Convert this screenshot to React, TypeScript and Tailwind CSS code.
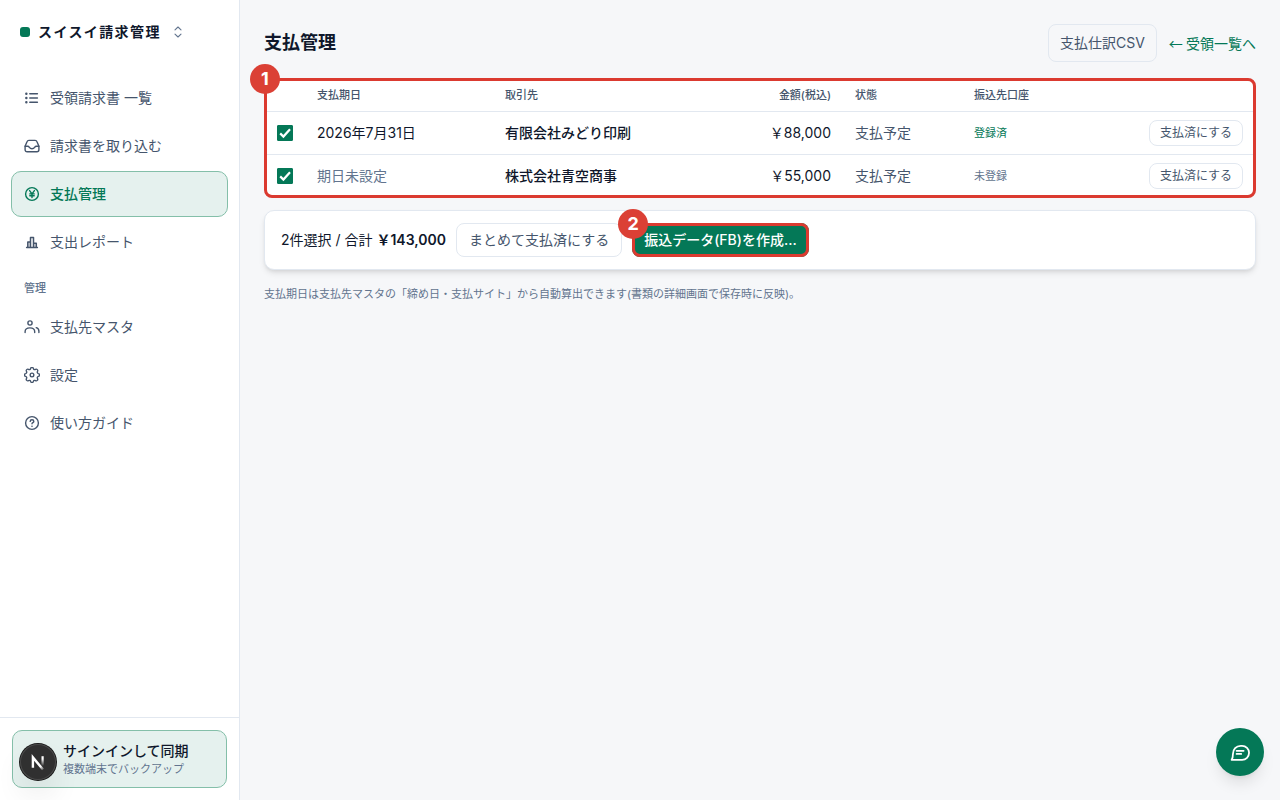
import clsx from "clsx";
import { useState } from "react";

type IconProps = { className?: string };

const strokeProps = {
  fill: "none",
  stroke: "currentColor",
  strokeLinecap: "round",
  strokeLinejoin: "round",
} as const;

const ListIcon = ({ className }: IconProps) => (
  <svg viewBox="0 0 16 16" className={className} {...strokeProps} strokeWidth={1.5} aria-hidden>
    <path d="M5.8 3.8h7.6M5.8 8h7.6M5.8 12.2h7.6" />
    <path d="M2.3 3.8h.1M2.3 8h.1M2.3 12.2h.1" strokeWidth={2.4} />
  </svg>
);

const InboxIcon = ({ className }: IconProps) => (
  <svg viewBox="0 0 16 16" className={className} {...strokeProps} strokeWidth={1.4} aria-hidden>
    <path d="M1.1 8.2v3.6a2 2 0 0 0 2 2h9.8a2 2 0 0 0 2-2V8.2L13 3.7a2 2 0 0 0-1.9-1.3H4.9A2 2 0 0 0 3 3.7z" />
    <path d="M1.1 8.2h2.5c1 0 1.4.5 1.8 1.1.5.8 1.3 1.4 2.6 1.4s2.1-.6 2.6-1.4c.4-.6.8-1.1 1.8-1.1h2.5" />
  </svg>
);

const YenIcon = ({ className }: IconProps) => (
  <svg viewBox="0 0 16 16" className={className} {...strokeProps} strokeWidth={1.4} aria-hidden>
    <circle cx="8" cy="8" r="6.4" />
    <path d="M5.6 4.6 8 7.8l2.4-3.2M8 7.8v3.8M5.8 7.9h4.4M5.8 9.8h4.4" />
  </svg>
);

const ChartIcon = ({ className }: IconProps) => (
  <svg viewBox="0 0 16 16" className={className} {...strokeProps} strokeWidth={1.5} aria-hidden>
    <path d="M2.6 13.4h10.8M3.8 13.2V8h2.6M6.5 13.2V3.4h3v9.8M9.5 9.2h2.8v4" />
    <path d="M5.1 8.4v4.6M10.9 9.8v3.2" strokeWidth={1} strokeOpacity={0.4} />
  </svg>
);

const UsersIcon = ({ className }: IconProps) => (
  <svg viewBox="0 0 16 16" className={className} {...strokeProps} strokeWidth={1.4} aria-hidden>
    <circle cx="6" cy="4" r="2.1" />
    <path d="M1.1 13.6v-.9c0-2.2 1.8-3.8 4.8-3.8s4.8 1.6 4.8 3.8v.9" />
    <path d="M12.2 8.6c1.7.5 2.7 1.7 2.7 3.5v1.5" />
  </svg>
);

const GearIcon = ({ className }: IconProps) => (
  <svg viewBox="2 1.4 20 20" className={className} {...strokeProps} strokeWidth={1.7} aria-hidden>
    <path d="M10.3 3.3c.4-1.9 3-1.9 3.4 0a1.8 1.8 0 0 0 2.7 1.1c1.6-1 3.5.9 2.5 2.5a1.8 1.8 0 0 0 1.1 2.7c1.9.4 1.9 3.1 0 3.5a1.8 1.8 0 0 0-1.1 2.8c1 1.6-.9 3.5-2.5 2.5a1.8 1.8 0 0 0-2.7 1.1c-.4 1.9-3 1.9-3.4 0a1.8 1.8 0 0 0-2.7-1.1c-1.6 1-3.5-.9-2.5-2.5A1.8 1.8 0 0 0 4 13.1c-1.9-.4-1.9-3.1 0-3.5a1.8 1.8 0 0 0 1.1-2.7c-1-1.6.9-3.5 2.5-2.5a1.8 1.8 0 0 0 2.7-1.1z" />
    <circle cx="12" cy="11.4" r="2.3" />
  </svg>
);

const HelpIcon = ({ className }: IconProps) => (
  <svg viewBox="0 0 16 16" className={className} {...strokeProps} strokeWidth={1.4} aria-hidden>
    <circle cx="8" cy="8" r="6.4" />
    <path d="M6.2 6.4c0-1 .8-1.7 1.8-1.7s1.8.7 1.8 1.7c0 1.2-1.8 1.2-1.8 2.4" />
    <path d="M8 11.2v.1" strokeWidth={1.6} />
  </svg>
);

const SwitchIcon = ({ className }: IconProps) => (
  <svg viewBox="0 0 14 14" className={className} {...strokeProps} strokeWidth={1.1} aria-hidden>
    <path d="M4 4.9 7 2l3 2.9M4 9.1 7 12l3-2.9" />
  </svg>
);

const ChatIcon = ({ className }: IconProps) => (
  <svg viewBox="0 0 24 24" className={className} {...strokeProps} strokeWidth={1.8} aria-hidden>
    <path d="M3.6 19.8c1.3-1.4 1.3-3.3 1.3-5.6 0-5 3.3-8.3 7.8-8.3h1.4a6.95 6.95 0 0 1 0 13.9z" />
    <path d="M8.6 10.8h7M8.6 13.9h4.6" />
  </svg>
);

const mainNav = [
  { id: "received", label: "受領請求書 一覧", icon: ListIcon },
  { id: "import", label: "請求書を取り込む", icon: InboxIcon },
  { id: "payments", label: "支払管理", icon: YenIcon },
  { id: "report", label: "支出レポート", icon: ChartIcon },
];

const adminNav = [
  { id: "payees", label: "支払先マスタ", icon: UsersIcon },
  { id: "settings", label: "設定", icon: GearIcon },
  { id: "guide", label: "使い方ガイド", icon: HelpIcon },
];

const payments = [
  { id: 1, due: "2026年7月31日", payee: "有限会社みどり印刷", amount: 88000, status: "支払予定", registered: true },
  { id: 2, due: null, payee: "株式会社青空商事", amount: 55000, status: "支払予定", registered: false },
];

const yen = (n: number) => "￥" + n.toLocaleString("en-US");

const NavItem = ({ item, active }: { item: (typeof mainNav)[number]; active?: boolean }) => {
  const Icon = item.icon;
  return (
    <a
      href={"#" + item.id}
      aria-current={active ? "page" : undefined}
      className={clsx(
        "flex h-[46px] items-center gap-2.5 rounded-[10px] border px-3 text-sm",
        active
          ? "border-[#84bfa9] bg-[#e5f1ee] font-medium text-[#047857]"
          : "border-transparent text-slate-600",
      )}
    >
      <Icon className="size-4 shrink-0" />
      {item.label}
    </a>
  );
};

const Sidebar = () => (
  <aside className="flex w-60 shrink-0 flex-col border-r border-slate-200 bg-white">
    <button className="flex h-16 items-center px-5 text-sm font-bold tracking-widest text-slate-900">
      <span className="mr-2 size-2.5 rounded-[3px] bg-[#047857]" />
      スイスイ請求管理
      <SwitchIcon className="ml-2.5 size-3.5 text-slate-500" />
    </button>

    <nav className="flex flex-1 flex-col gap-0.5 px-[11px] pt-[11px]">
      {mainNav.map((item) => (
        <NavItem key={item.id} item={item} active={item.id === "payments"} />
      ))}
      <p className="px-[13px] pt-[13px] pb-1.5 text-[11px] leading-4 font-medium text-slate-500">管理</p>
      {adminNav.map((item) => (
        <NavItem key={item.id} item={item} />
      ))}
    </nav>

    <div className="border-t border-slate-200 p-3">
      <button className="flex h-[58px] w-full flex-col justify-center rounded-[10px] border border-[#84bfa9] bg-[#e5f1ee] pl-[50px] text-left">
        <span className="text-sm font-medium text-slate-900">サインインして同期</span>
        <span className="text-[11px] leading-4 text-slate-500">複数端末でバックアップ</span>
      </button>
    </div>
  </aside>
);

const Checkbox = ({ label, checked, onChange }: { label: string; checked: boolean; onChange: () => void }) => (
  <span className="grid size-4">
    <input
      type="checkbox"
      aria-label={label}
      checked={checked}
      onChange={onChange}
      className="peer col-start-1 row-start-1 size-4 appearance-none rounded-[1px] border border-slate-400 bg-white checked:border-[#047857] checked:bg-[#047857]"
    />
    <svg
      viewBox="0 0 16 16"
      className="pointer-events-none invisible col-start-1 row-start-1 size-4 text-white peer-checked:visible"
      fill="none"
      stroke="currentColor"
      strokeWidth={2.2}
      aria-hidden
    >
      <path d="M3.2 8.4 6.4 11.6 13 4.2" />
    </svg>
  </span>
);

const Marker = ({ children }: { children: React.ReactNode }) => (
  <span className="absolute -top-3.5 -left-3.5 flex size-[30px] items-center justify-center rounded-full bg-[#db4035] text-lg font-bold text-white">
    {children}
  </span>
);

const DevBadge = () => (
  <button
    aria-label="Dev Tools"
    className="fixed bottom-5 left-5 flex size-9 items-center justify-center rounded-full bg-[#303030] shadow-[0_0_0_1px_#171717,inset_0_0_0_1px_#4a4a4a,0_16px_32px_-8px_rgba(0,0,0,0.24)]"
  >
    <svg viewBox="0 0 36 36" className="size-9" fill="none" aria-hidden>
      <defs>
        <linearGradient id="diag" x1="18" y1="18" x2="24" y2="26" gradientUnits="userSpaceOnUse">
          <stop offset="0.5" stopColor="#fff" />
          <stop offset="1" stopColor="#fff" stopOpacity="0.1" />
        </linearGradient>
        <linearGradient id="stem" x1="22.6" y1="12" x2="22.6" y2="22" gradientUnits="userSpaceOnUse">
          <stop offset="0.3" stopColor="#fff" />
          <stop offset="1" stopColor="#fff" stopOpacity="0" />
        </linearGradient>
      </defs>
      <path d="M12.9 23.8V13.4L23 25.6" stroke="url(#diag)" strokeWidth="2.4" />
      <path d="M22.6 12.2v9.6" stroke="url(#stem)" strokeWidth="2.2" />
    </svg>
  </button>
);

const App = () => {
  const [selected, setSelected] = useState<number[]>([1, 2]);

  const toggle = (id: number) =>
    setSelected((prev) => (prev.includes(id) ? prev.filter((x) => x !== id) : [...prev, id]));

  const total = payments
    .filter((p) => selected.includes(p.id))
    .reduce((sum, p) => sum + p.amount, 0);

  return (
    <div className="flex min-h-screen bg-[#f6f7f9] font-['Inter','Noto_Sans_CJK_JP',sans-serif] text-slate-900">
      <Sidebar />

      <main className="min-w-0 flex-1 p-6">
        <header className="mb-4 flex items-center justify-between">
          <h1 className="text-lg font-bold">支払管理</h1>
          <div className="flex items-center gap-3 text-sm">
            <button className="h-[38px] rounded-lg border border-slate-200 px-[11px] text-slate-600">
              支払仕訳CSV
            </button>
            <a href="#received" className="font-['Noto_Sans_CJK_JP',sans-serif] text-[#047857]">
              ← 受領一覧へ
            </a>
          </div>
        </header>

        <section className="relative">
          <div className="overflow-hidden rounded-lg border border-slate-200 bg-white">
            <table className="w-full table-fixed text-left text-sm">
              <colgroup>
                <col className="w-10" />
                <col className="w-[19%]" />
                <col />
                <col className="w-28" />
                <col className="w-[119px]" />
                <col className="w-[120px]" />
                <col className="w-[173px]" />
              </colgroup>
              <thead>
                <tr className="border-b border-slate-200 text-[11px] leading-4 text-slate-600 *:px-3 *:py-2 *:font-medium">
                  <th aria-label="選択" />
                  <th>支払期日</th>
                  <th>取引先</th>
                  <th className="text-right">金額(税込)</th>
                  <th>状態</th>
                  <th>振込先口座</th>
                  <th aria-label="操作" />
                </tr>
              </thead>
              <tbody className="divide-y divide-slate-200">
                {payments.map((p) => (
                  <tr key={p.id} className="*:px-3 *:py-2">
                    <td>
                      <Checkbox
                        label={p.payee}
                        checked={selected.includes(p.id)}
                        onChange={() => toggle(p.id)}
                      />
                    </td>
                    <td className={p.due ? "" : "text-slate-500"}>{p.due ?? "期日未設定"}</td>
                    <td className="font-medium">{p.payee}</td>
                    <td className="text-right">{yen(p.amount)}</td>
                    <td className="text-slate-600">{p.status}</td>
                    <td
                      className={clsx(
                        "text-[11px] leading-5",
                        p.registered ? "text-[#047857]" : "text-slate-500",
                      )}
                    >
                      {p.registered ? "登録済" : "未登録"}
                    </td>
                    <td>
                      <button className="ml-auto block h-[26px] rounded-lg border border-slate-200 px-2.5 text-xs text-slate-600">
                        支払済にする
                      </button>
                    </td>
                  </tr>
                ))}
              </tbody>
            </table>
          </div>
          <div className="pointer-events-none absolute inset-0 rounded-lg border-3 border-[#db3a30]" />
          <Marker>1</Marker>
        </section>

        <section className="mt-3 flex items-center gap-2.5 rounded-[10px] border border-slate-200 bg-white px-4 py-3 text-sm shadow-md">
          <p>
            {selected.length}件選択 / 合計 <strong className="font-semibold">{yen(total)}</strong>
          </p>
          <button className="h-[34px] rounded-lg border border-slate-200 px-3 text-slate-600">
            まとめて支払済にする
          </button>
          <div className="relative">
            <button className="h-[34px] rounded-lg bg-[#047857] px-3 font-medium text-white">
              振込データ(FB)を作成…
            </button>
            <div className="pointer-events-none absolute inset-0 rounded-lg border-3 border-[#db3a30]" />
            <Marker>2</Marker>
          </div>
        </section>

        <p className="mt-4 text-[11px] leading-4 text-slate-500">
          支払期日は支払先マスタの「締め日・支払サイト」から自動算出できます(書類の詳細画面で保存時に反映)。
        </p>
      </main>

      <button
        aria-label="チャット"
        className="fixed right-4 bottom-6 flex size-12 items-center justify-center rounded-full bg-[#047857] text-white shadow-lg"
      >
        <ChatIcon className="size-6" />
      </button>
      <DevBadge />
    </div>
  );
};

export default App;
